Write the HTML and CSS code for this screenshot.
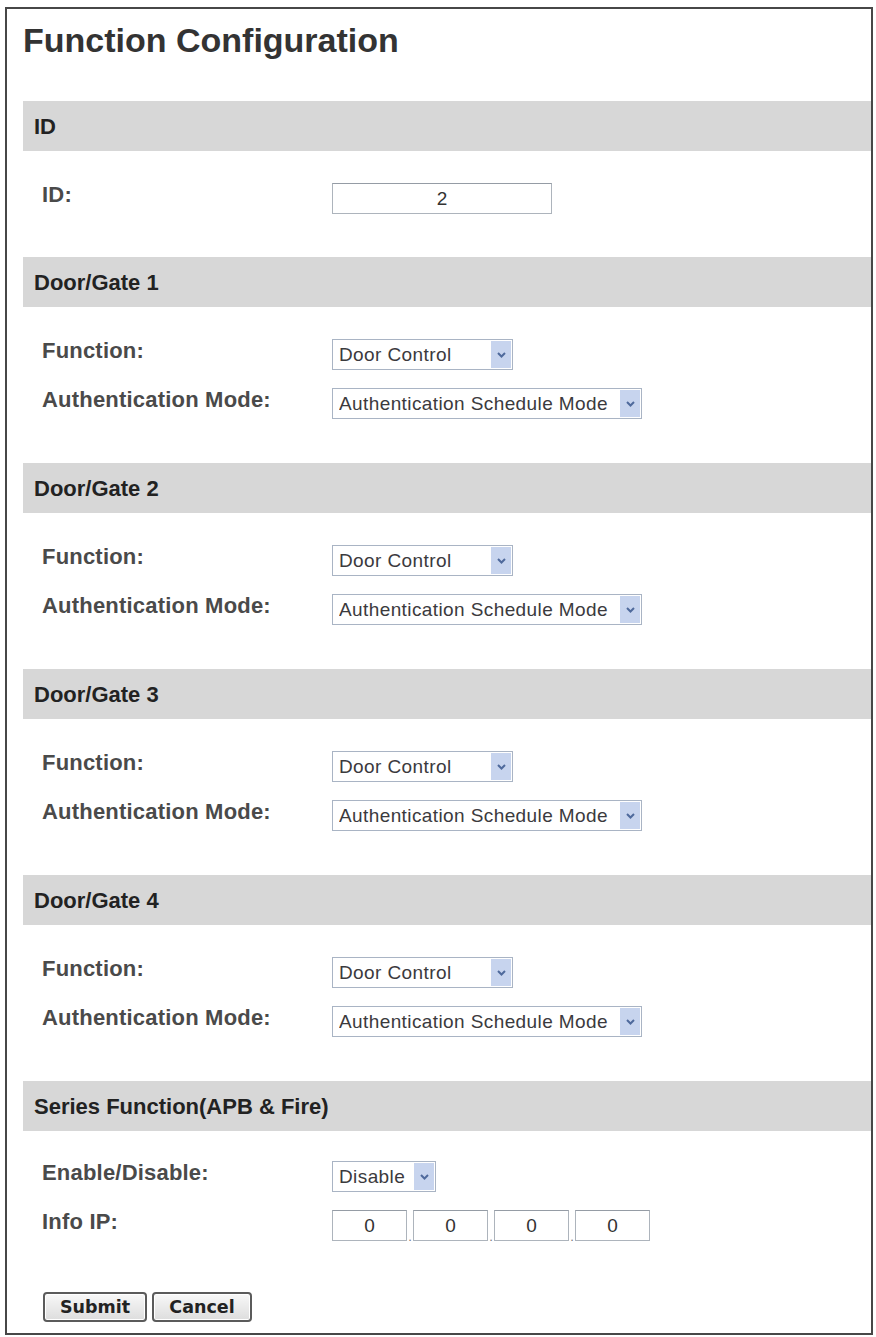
FILE: index.html
```html
<!DOCTYPE html>
<html lang="en">
<head>
    <meta charset="UTF-8">
    <meta name="viewport" content="width=device-width, initial-scale=1.0">
    <title>Function Configuration</title>
    <link rel="stylesheet" href="styles.css">
</head>
<body>

    <div class="page">
        <h1 class="title">Function Configuration</h1>

        <!-- Controller ID -->
        <div class="section">
            <div class="bar">ID</div>
            <div class="fields fields-single">
                <div class="row">
                    <span class="label">ID:</span>
                    <input class="text-box id-box" type="text" value="2">
                </div>
            </div>
        </div>

        <!-- Door/Gate 1 -->
        <div class="section">
            <div class="bar">Door/Gate 1</div>
            <div class="fields">
                <div class="row">
                    <span class="label">Function:</span>
                    <span class="select select-function">
                        <select><option>Door Control</option></select>
                        <span class="arrow"><svg width="9" height="6" viewBox="0 0 9 6"><polyline points="1,1 4.5,4.5 8,1" /></svg></span>
                    </span>
                </div>
                <div class="row">
                    <span class="label">Authentication Mode:</span>
                    <span class="select select-mode">
                        <select><option>Authentication Schedule Mode</option></select>
                        <span class="arrow"><svg width="9" height="6" viewBox="0 0 9 6"><polyline points="1,1 4.5,4.5 8,1" /></svg></span>
                    </span>
                </div>
            </div>
        </div>

        <!-- Door/Gate 2 -->
        <div class="section">
            <div class="bar">Door/Gate 2</div>
            <div class="fields">
                <div class="row">
                    <span class="label">Function:</span>
                    <span class="select select-function">
                        <select><option>Door Control</option></select>
                        <span class="arrow"><svg width="9" height="6" viewBox="0 0 9 6"><polyline points="1,1 4.5,4.5 8,1" /></svg></span>
                    </span>
                </div>
                <div class="row">
                    <span class="label">Authentication Mode:</span>
                    <span class="select select-mode">
                        <select><option>Authentication Schedule Mode</option></select>
                        <span class="arrow"><svg width="9" height="6" viewBox="0 0 9 6"><polyline points="1,1 4.5,4.5 8,1" /></svg></span>
                    </span>
                </div>
            </div>
        </div>

        <!-- Door/Gate 3 -->
        <div class="section">
            <div class="bar">Door/Gate 3</div>
            <div class="fields">
                <div class="row">
                    <span class="label">Function:</span>
                    <span class="select select-function">
                        <select><option>Door Control</option></select>
                        <span class="arrow"><svg width="9" height="6" viewBox="0 0 9 6"><polyline points="1,1 4.5,4.5 8,1" /></svg></span>
                    </span>
                </div>
                <div class="row">
                    <span class="label">Authentication Mode:</span>
                    <span class="select select-mode">
                        <select><option>Authentication Schedule Mode</option></select>
                        <span class="arrow"><svg width="9" height="6" viewBox="0 0 9 6"><polyline points="1,1 4.5,4.5 8,1" /></svg></span>
                    </span>
                </div>
            </div>
        </div>

        <!-- Door/Gate 4 -->
        <div class="section">
            <div class="bar">Door/Gate 4</div>
            <div class="fields">
                <div class="row">
                    <span class="label">Function:</span>
                    <span class="select select-function">
                        <select><option>Door Control</option></select>
                        <span class="arrow"><svg width="9" height="6" viewBox="0 0 9 6"><polyline points="1,1 4.5,4.5 8,1" /></svg></span>
                    </span>
                </div>
                <div class="row">
                    <span class="label">Authentication Mode:</span>
                    <span class="select select-mode">
                        <select><option>Authentication Schedule Mode</option></select>
                        <span class="arrow"><svg width="9" height="6" viewBox="0 0 9 6"><polyline points="1,1 4.5,4.5 8,1" /></svg></span>
                    </span>
                </div>
            </div>
        </div>

        <!-- Series function -->
        <div class="section">
            <div class="bar">Series Function(APB &amp; Fire)</div>
            <div class="fields fields-series">
                <div class="row">
                    <span class="label">Enable/Disable:</span>
                    <span class="select select-toggle">
                        <select><option>Disable</option><option>Enable</option></select>
                        <span class="arrow"><svg width="9" height="6" viewBox="0 0 9 6"><polyline points="1,1 4.5,4.5 8,1" /></svg></span>
                    </span>
                </div>
                <div class="row">
                    <span class="label">Info IP:</span>
                    <span class="ip">
                        <input class="text-box ip-box" type="text" value="0">
                        <span class="dot">.</span>
                        <input class="text-box ip-box" type="text" value="0">
                        <span class="dot">.</span>
                        <input class="text-box ip-box" type="text" value="0">
                        <span class="dot">.</span>
                        <input class="text-box ip-box" type="text" value="0">
                    </span>
                </div>
            </div>
        </div>

        <div class="actions">
            <button class="btn btn-submit" type="submit">Submit</button>
            <button class="btn btn-cancel" type="button">Cancel</button>
        </div>
    </div>

</body>
</html>
```

FILE: styles.css
```css
/* General Styles */
body {
    margin: 0;
    background-color: #ffffff;
    font-family: "Liberation Sans", Arial, sans-serif;
    color: #333;
}

/* Outer frame */
.page {
    box-sizing: border-box;
    width: 868px;
    height: 1328px;
    margin: 7px 0 0 5px;
    border: 2px solid #474747;
    padding: 11px 0 0 16px;
}

.title {
    margin: 0 0 41px;
    font-size: 34px;
    line-height: 40px;
    font-weight: bold;
    color: #333;
}

/* Section header bars */
.bar {
    display: flex;
    align-items: center;
    height: 50px;
    padding: 2px 0 0 11px;
    box-sizing: border-box;
    background-color: #d7d7d7;
    font-size: 22px;
    font-weight: bold;
    color: #222;
}

.fields {
    display: flex;
    flex-direction: column;
    gap: 18px;
    padding: 32px 0 44px;
}

.fields-single {
    padding-bottom: 43px;
}

.fields-series {
    padding: 30px 0 0;
}

.row {
    display: flex;
    align-items: flex-start;
    height: 31px;
    padding-left: 19px;
}

.label {
    width: 290px;
    font-size: 22px;
    line-height: 24px;
    font-weight: bold;
    letter-spacing: 0.2px;
    color: #4a4a4a;
}

/* Text inputs */
.text-box {
    box-sizing: border-box;
    height: 31px;
    margin: 0;
    padding: 0;
    border: 1px solid #adb4bc;
    border-top-color: #959ca5;
    background-color: #fff;
    font-family: "Liberation Sans", Arial, sans-serif;
    font-size: 19px;
    text-align: center;
    color: #333;
}

.id-box {
    width: 220px;
}

.ip {
    display: flex;
    align-items: flex-end;
}

.ip-box {
    width: 75px;
}

.dot {
    width: 6px;
    font-size: 13px;
    line-height: 13px;
    margin-bottom: -2px;
    text-align: center;
    color: #777;
}

/* Drop-down lists */
.select {
    position: relative;
    display: inline-block;
}

.select select {
    -webkit-appearance: none;
    appearance: none;
    box-sizing: border-box;
    height: 31px;
    margin: 0;
    padding: 0 26px 0 6px;
    border: 1px solid #a9b4c4;
    border-radius: 0;
    background-color: #fff;
    font-family: "Liberation Sans", Arial, sans-serif;
    font-size: 19px;
    letter-spacing: 0.4px;
    color: #3b3a3d;
}

.select .arrow {
    position: absolute;
    top: 2px;
    right: 2px;
    bottom: 2px;
    width: 20px;
    display: flex;
    align-items: center;
    justify-content: center;
    background-color: #c7d4ee;
    pointer-events: none;
}

.select .arrow polyline {
    fill: none;
    stroke: #4f6a9c;
    stroke-width: 2;
}

.select-function select {
    width: 181px;
}

.select-mode select {
    width: 310px;
}

.select-toggle select {
    width: 104px;
}

/* Button styles */
.actions {
    display: flex;
    gap: 5px;
    padding: 51px 0 0 20px;
}

.btn {
    box-sizing: border-box;
    height: 30px;
    padding: 0;
    border: 2px solid #5b5b5b;
    border-radius: 4px;
    background: linear-gradient(#f8f8f8, #dddddd);
    box-shadow: inset 0 0 0 1px #ffffff;
    font-family: "DejaVu Sans", Verdana, sans-serif;
    font-size: 17.5px;
    font-weight: bold;
    color: #222;
    cursor: pointer;
}

.btn-submit {
    width: 104px;
}

.btn-cancel {
    width: 100px;
}
```
